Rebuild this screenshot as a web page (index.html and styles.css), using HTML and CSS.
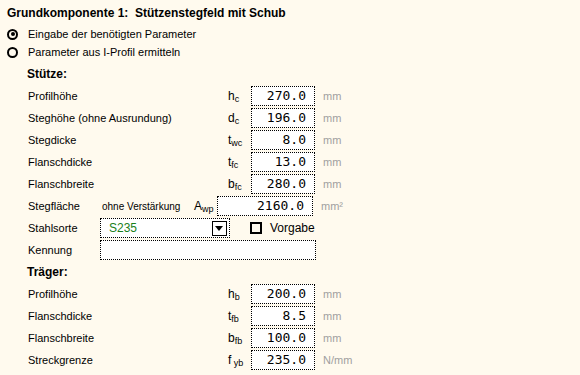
FILE: index.html
```html
<!DOCTYPE html>
<html lang="de">
<head>
    <meta charset="UTF-8">
    <title>Grundkomponente 1</title>
    <link rel="stylesheet" href="styles.css">
</head>
<body>
    <div class="page">
        <div class="title">Grundkomponente 1:&nbsp; Stützenstegfeld mit Schub</div>

        <div class="radio-row"><span class="radio on"></span>Eingabe der benötigten Parameter</div>
        <div class="radio-row"><span class="radio"></span>Parameter aus I-Profil ermitteln</div>

        <div class="section first">Stütze:</div>

        <div class="row">
            <span class="label">Profilhöhe</span>
            <span class="sym">h<sub>c</sub></span>
            <span class="field">270.0</span>
            <span class="unit">mm</span>
        </div>
        <div class="row">
            <span class="label">Steghöhe (ohne Ausrundung)</span>
            <span class="sym">d<sub>c</sub></span>
            <span class="field">196.0</span>
            <span class="unit">mm</span>
        </div>
        <div class="row">
            <span class="label">Stegdicke</span>
            <span class="sym">t<sub>wc</sub></span>
            <span class="field">8.0</span>
            <span class="unit">mm</span>
        </div>
        <div class="row">
            <span class="label">Flanschdicke</span>
            <span class="sym">t<sub>fc</sub></span>
            <span class="field">13.0</span>
            <span class="unit">mm</span>
        </div>
        <div class="row">
            <span class="label">Flanschbreite</span>
            <span class="sym">b<sub>fc</sub></span>
            <span class="field">280.0</span>
            <span class="unit">mm</span>
        </div>
        <div class="row">
            <span class="label short">Stegfläche</span>
            <span class="note">ohne Verstärkung</span>
            <span class="sym">A<sub>wp</sub></span>
            <span class="field wide">2160.0</span>
            <span class="unit">mm²</span>
        </div>
        <div class="row">
            <span class="label short">Stahlsorte</span>
            <span class="select">
                <span class="select-text">S235</span>
                <span class="select-btn"></span>
            </span>
            <span class="check"></span>
            <span class="check-label">Vorgabe</span>
        </div>
        <div class="row">
            <span class="label short">Kennung</span>
            <span class="field text"></span>
        </div>

        <div class="section">Träger:</div>

        <div class="row">
            <span class="label">Profilhöhe</span>
            <span class="sym">h<sub>b</sub></span>
            <span class="field">200.0</span>
            <span class="unit">mm</span>
        </div>
        <div class="row">
            <span class="label">Flanschdicke</span>
            <span class="sym">t<sub>fb</sub></span>
            <span class="field">8.5</span>
            <span class="unit">mm</span>
        </div>
        <div class="row">
            <span class="label">Flanschbreite</span>
            <span class="sym">b<sub>fb</sub></span>
            <span class="field">100.0</span>
            <span class="unit">mm</span>
        </div>
        <div class="row">
            <span class="label">Streckgrenze</span>
            <span class="sym">f<sub> yb</sub></span>
            <span class="field">235.0</span>
            <span class="unit">N/mm</span>
        </div>
    </div>
</body>
</html>
```

FILE: styles.css
```css
body {
    margin: 0;
    background: #fffaee;
    font-family: "Liberation Sans", Arial, sans-serif;
    font-size: 11px;
    color: #000;
    overflow: hidden;
}
.page {
    padding: 3px 0 0 7px;
}
.title {
    font-weight: bold;
    font-size: 12px;
    height: 22px;
    line-height: 20px;
}
.radio-row {
    display: flex;
    align-items: center;
    height: 18px;
}
.radio {
    width: 7px;
    height: 7px;
    border: 2px solid #000;
    border-radius: 50%;
    margin-right: 10px;
    position: relative;
}
.radio.on::after {
    content: "";
    position: absolute;
    left: 1.5px;
    top: 1.5px;
    width: 4px;
    height: 4px;
    border-radius: 50%;
    background: #000;
}
.section {
    font-weight: bold;
    font-size: 12px;
    height: 22px;
    line-height: 22px;
    padding-left: 20px;
}
.section.first {
    margin-top: 2px;
}
.row {
    display: flex;
    align-items: center;
    height: 22px;
    padding-left: 21px;
}
.label {
    width: 200px;
    flex: none;
}
.label.short {
    width: 72px;
}
.note {
    font-size: 10px;
    width: 94px;
    flex: none;
    padding-left: 2px;
    box-sizing: border-box;
}
.sym {
    width: 23px;
    flex: none;
    font-size: 12px;
}
.sym sub {
    font-size: 9px;
    vertical-align: -2px;
}
.field {
    box-sizing: border-box;
    width: 64px;
    height: 20px;
    border: 1px dotted #000;
    background: #fff;
    font-family: "DejaVu Sans Mono", monospace;
    font-size: 13px;
    line-height: 18px;
    text-align: right;
    padding-right: 8px;
    flex: none;
}
.field.wide {
    width: 96px;
}
.field.text {
    width: 216px;
}
.unit {
    color: #a0a0a0;
    margin-left: 8px;
    font-size: 11px;
}
.select {
    box-sizing: border-box;
    width: 130px;
    height: 20px;
    border: 1px dotted #000;
    background: #fff;
    display: flex;
    align-items: center;
    justify-content: space-between;
    padding: 0 2px 0 8px;
}
.select-text {
    color: #1a801a;
    font-size: 12px;
}
.select-btn {
    box-sizing: border-box;
    width: 15px;
    height: 15px;
    border: 1px solid #000;
    position: relative;
}
.select-btn::after {
    content: "";
    position: absolute;
    left: 2px;
    top: 4px;
    border-left: 4.5px solid transparent;
    border-right: 4.5px solid transparent;
    border-top: 5px solid #000;
}
.check {
    box-sizing: border-box;
    width: 12px;
    height: 12px;
    border: 2px solid #000;
    margin-left: 20px;
    flex: none;
}
.check-label {
    margin-left: 8px;
    font-size: 12px;
}
```
